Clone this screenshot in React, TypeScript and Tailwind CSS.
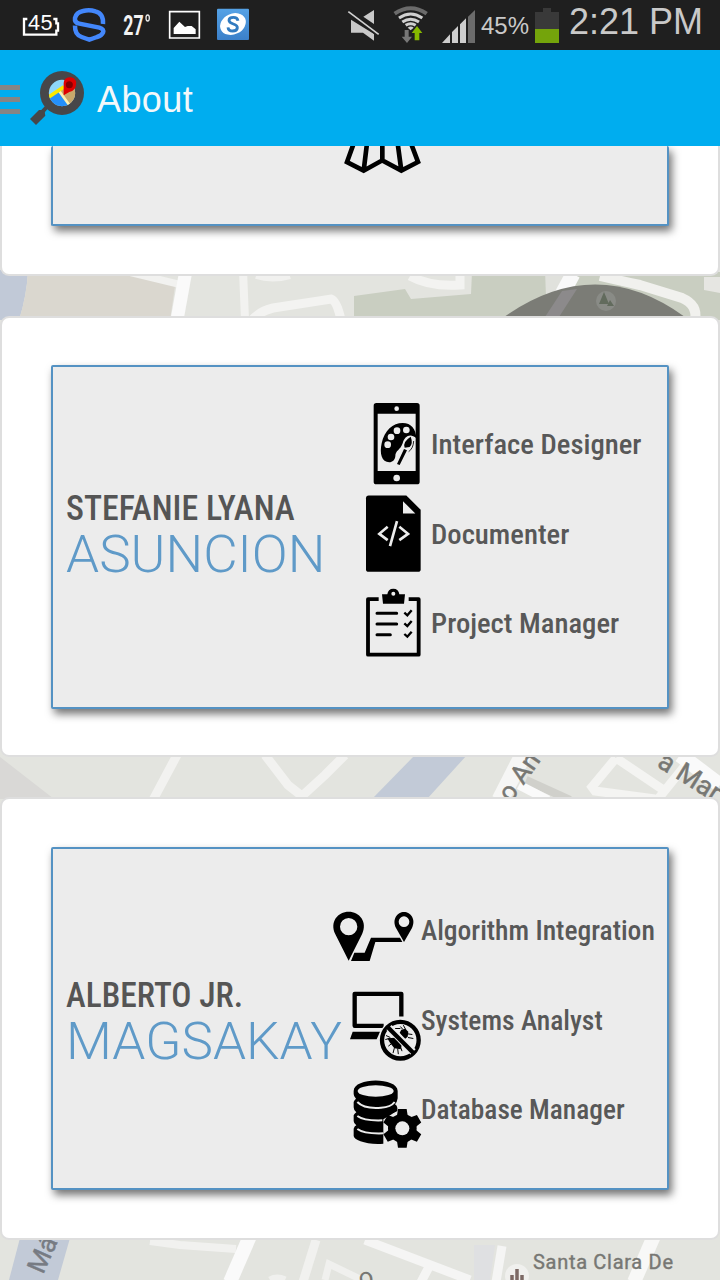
import type { ReactNode } from "react";

function StatusBar() {
  return (
    <div className="flex h-[50px] w-full shrink-0 items-start bg-[#1f1f1f] font-['Liberation_Sans',sans-serif] text-[#c9c9c9]">
      <svg className="h-[50px] w-[60px]" viewBox="0 0 180 150">
        <path d="M82 57h-10v47h97v-12h5v-22h-5v-13h-9" fill="none" stroke="#fff" strokeWidth="7" />
        <text x="84" y="90" fontSize="65" textLength="74" fill="#fff" fontFamily="Liberation Sans, sans-serif">45</text>
      </svg>
      <svg className="h-[50px] w-[54px]" viewBox="180 0 162 150">
        <path d="M309 72Q311 40 286 34Q268 28 249 33Q229 37 225 54Q223 68 238 71L298 83Q313 87 309 98Q305 107 291 111Q277 116 268 119Q259 116 245 111Q224 104 225 77" fill="none" stroke="#4387fb" strokeWidth="13.5" />
      </svg>
      <svg className="h-[50px] w-[54px]" viewBox="342 0 162 150">
        <text x="370" y="104" fontSize="82" fontWeight="700" textLength="61" lengthAdjust="spacingAndGlyphs" fill="#f2f2f2" fontFamily="Roboto, sans-serif">27</text>
        <ellipse cx="443" cy="54" rx="5" ry="9" fill="none" stroke="#e8e8e8" strokeWidth="4" />
      </svg>
      <svg className="h-[50px] w-[48px]" viewBox="504 0 144 150">
        <path d="M509 35h89v79h-89z" fill="none" stroke="#fff" strokeWidth="5" />
        <path d="M521 102V84l17-19 17 16 8-3 12 0 12 10v14z" fill="#fff" />
      </svg>
      <svg className="h-[50px] w-[40px]" viewBox="648 0 120 150">
        <defs>
          <linearGradient id="tile" x1="0" y1="0" x2="0" y2="1">
            <stop offset="0" stopColor="#55a2e6" />
            <stop offset="1" stopColor="#3b80c9" />
          </linearGradient>
        </defs>
        <rect x="651" y="26" width="96" height="94" rx="3" fill="url(#tile)" />
        <ellipse cx="699" cy="72" rx="40" ry="31" fill="#fff" transform="rotate(-25 699 72)" />
        <path d="M714 62Q712 52 700 52Q687 52 687 61Q687 68 700 72Q713 76 712 84Q711 93 698 93Q685 93 684 82" fill="none" stroke="#327bc0" strokeWidth="8.500" />
      </svg>
      <div className="flex-1" />
      <svg className="h-[50px] w-[137px]" viewBox="15 0 411 150">
        <path d="M33 59l69 43v20l-33-24H33zM70 50l32-20v42z" fill="#c9c9c9" />
        <path d="M27 33L117 105" stroke="#1f1f1f" strokeWidth="13" />
        <path d="M25 35L116 103" stroke="#d2d2d2" strokeWidth="5" />
        <path d="M164 41Q212 8 260 41" fill="none" stroke="#6b6b6b" strokeWidth="12" />
        <path d="M177 54Q212 30 247 54M187 66Q212 49 237 66M197 76Q212 66 227 76" fill="none" stroke="#d0d0d0" strokeWidth="9" />
        <path d="M203 83Q212 76 221 83L212 91z" fill="#d0d0d0" />
        <path d="M194 90h12v20h10l-15 19-16-19h9z" fill="#777" />
        <path d="M224 121V99h-9l16-21 16 21h-9v22z" fill="#86b800" />
        <path d="M306 129l24-26v26zM336 96l18-18v51h-18zM360 73l18-18v74h-18z" fill="#cecece" />
        <path d="M384 50l21-20v99h-21z" fill="#6b6b6b" />
      </svg>
      <span className="-ml-[1px] mt-[12px] w-[50px] text-[24px] leading-7 whitespace-nowrap">45%</span>
      <svg className="ml-[3px] h-[50px] w-[27px]" viewBox="582 0 81 150">
        <path d="M585 36h24V24h24v12h24v51h-72z" fill="#393939" />
        <path d="M585 87h72v42h-72z" fill="#74a40b" />
      </svg>
      <span className="mt-[2px] ml-[8px] w-[151px] text-[36px] leading-10 whitespace-nowrap">2:21 PM</span>
    </div>
  );
}

function Header() {
  return (
    <header className="flex h-24 w-full shrink-0 items-center bg-[#00adef]">
      <svg className="h-24 w-[97px]" viewBox="0 150 291 288">
        <path d="M0 262.500h60M0 298.500h60M0 334.500h60" stroke="#858585" strokeWidth="15" />
        <path d="M143 318L125 338" stroke="#474749" strokeWidth="12" />
        <path d="M117 330H133L136 347 108 375 90 357z" fill="#474749" />
        <circle cx="186" cy="279" r="66" fill="#474749" />
        <clipPath id="lens"><circle cx="186" cy="279" r="39.500" /></clipPath>
        <g clipPath="url(#lens)">
          <path d="M140 230h100v100H140z" fill="#8ed8fa" />
          <path d="M140 300L178 274 215 325H140z" fill="#2490fb" />
          <path d="M178 274L197 255 240 245V325H215z" fill="#c8a86b" />
          <path d="M178 274L210 318" stroke="#fff1b0" strokeWidth="8" />
          <path d="M142 294L192 260" stroke="#fbe800" strokeWidth="11" />
        </g>
        <path d="M191 286V249a19 17 0 1 1 37 5q0 16-20 22z" fill="#e00000" />
        <circle cx="208" cy="254" r="10.500" fill="#850000" />
      </svg>
      <h1 className="pt-[4px] font-['Liberation_Sans',sans-serif] text-[36px] leading-10 tracking-[0.4px] text-[#f3f8fa]">About</h1>
    </header>
  );
}

function MapBackground() {
  return (
    <svg className="absolute inset-0 h-full w-full" viewBox="0 146 720 1134">
      <rect y="146" width="720" height="1134" fill="#e3e4df" />
      <g>
        <path d="M0 270H28Q27 295 19 320H0z" fill="#c1c9d7" />
        <path d="M28 270H120L175 286 170 320H19Q27 295 28 270z" fill="#dad7cf" />
        <path d="M120 270L178 284" stroke="#f2f2f0" strokeWidth="7" />
        <path d="M186 270L177 320" stroke="#fafafa" strokeWidth="13" />
        <path d="M243 270L245 320" stroke="#f2f2f0" strokeWidth="8" />
        <path d="M252 320Q260 311 273 308L331 299Q337 301 341 320" fill="none" stroke="#f3f3f1" strokeWidth="9" />
        <path d="M256 276Q272 281 290 276" fill="none" stroke="#f1f1ef" strokeWidth="6" />
        <path d="M354 296L405 289 411 299 471 294 472 272H720V320H354z" fill="#c9cec1" />
        <path d="M545 270H575L556 292 546 297z" fill="#e0e1dc" />
        <path d="M410 276Q430 287 460 285V274" fill="none" stroke="#f3f3f1" strokeWidth="9" />
        <path d="M573 274L548 320" stroke="#f9f9f9" strokeWidth="15" />
        <path d="M600 276Q617 280 640 285L682 298Q698 305 695 320" fill="none" stroke="#f1f1ee" strokeWidth="10" />
        <path d="M704 277H720V293L704 290z" fill="#e6e6e2" />
        <path d="M504 317Q596 252 685 317z" fill="#7b7c76" />
        <path d="M562 291L577 289 559 317H545z" fill="#8c8a8b" />
        <circle cx="606" cy="301" r="10" fill="#898b86" />
        <path d="M604 292l5 12h-10zM610 300l4 6h-7z" fill="#626b5d" />
      </g>
      <g>
        <path d="M0 757L54 799H0z" fill="#d9d8d6" />
        <path d="M177 755L153 800M265 755L288 785 302 796 325 775 345 755" fill="none" stroke="#f2f2f0" strokeWidth="9" />
        <path d="M415 755H467L427 799H372z" fill="#c2cad7" />
        <path d="M523 755L500 800" stroke="#f6f6f5" strokeWidth="17" />
        <path d="M526 780L570 800" stroke="#d0d0cb" strokeWidth="8" />
        <path d="M519 785L548 800" stroke="#fafafa" strokeWidth="9" />
        <path d="M616 758L592 787 595 791 655 799M616 758L662 789 M692 757L658 799" fill="none" stroke="#f4f4f2" strokeWidth="9" />
        <path d="M680 755L720 785" stroke="#fafafa" strokeWidth="15" />
        <g fill="#777773" fontFamily="Roboto, sans-serif" stroke="#777773" strokeWidth=".5">
          <text transform="translate(511 803) rotate(-55)" fontSize="26">o An</text>
          <text transform="translate(656 766) rotate(32)" fontSize="27">a Mar</text>
        </g>
      </g>
      <g>
        <path d="M20 1238H70L58 1280H9z" fill="#c2cad7" />
        <path d="M150 1241L180 1245 236 1249" fill="none" stroke="#f1f1ef" strokeWidth="8" />
        <path d="M250 1236L230 1282" stroke="#fafafa" strokeWidth="14" />
        <path d="M316 1240L303 1282" stroke="#f1f1ef" strokeWidth="9" />
        <path d="M325 1280L329 1264 362 1280M270 1280Q277 1276 285 1280" fill="none" stroke="#f0f0ee" strokeWidth="7" />
        <path d="M365 1240L470 1280M430 1265L421 1282M502 1246L496 1282" fill="none" stroke="#f5f5f4" strokeWidth="9" />
        <path d="M474 1245h21l-5 35h-16z" fill="#dfe0e2" />
        <path d="M654 1236L634 1282" stroke="#f8f8f7" strokeWidth="14" />
        <circle cx="517" cy="1276" r="12" fill="#f0f0ee" />
        <path d="M512 1275v6M517 1269v12M522 1275v6" stroke="#7c6965" strokeWidth="3.500" />
        <g fill="#777773" fontFamily="Roboto, sans-serif">
          <text transform="translate(43 1275) rotate(-66)" fontSize="26" fill="#777b83" stroke="#777b83" strokeWidth=".5">Má</text>
          <text x="533" y="1269" fontSize="20" textLength="140" stroke="#777773" strokeWidth=".4">Santa Clara De</text>
          <text transform="translate(360 1287) rotate(-10)" fontSize="26">o</text>
        </g>
      </g>
    </svg>
  );
}

const PANEL =
  "flex w-[618px] rounded-[2px] border-2 border-[#5492c3] bg-[#ececec] shadow-[3px_5px_8px_rgba(0,0,0,0.55)]";
const CARD =
  "ml-[2px] flex w-[716px] shrink-0 justify-center bg-white shadow-[0_0_0_2px_#dedede]";

function Skill({ box, width, label, labelClass, children }: { box: string; width: string; label: string; labelClass: string; children: ReactNode }) {
  return (
    <li className="flex h-[89.5px] items-center">
      <svg className={"h-[89.5px] shrink-0 overflow-visible " + width} viewBox={box}>{children}</svg>
      <span className={"origin-left text-[28px] leading-8 font-medium font-stretch-condensed whitespace-nowrap text-[#585858] " + labelClass}>{label}</span>
    </li>
  );
}

function Name({ first, last, className, firstClass }: { first: string; last: string; className: string; firstClass: string }) {
  return (
    <div className={"shrink-0 pl-[13px] whitespace-nowrap " + className}>
      <div className={"origin-left text-[35px] leading-[41px] font-medium font-stretch-condensed text-[#555] " + firstClass}>{first}</div>
      <div className="origin-left scale-x-[1.02] font-[Roboto,sans-serif] text-[52px] leading-[52px] font-light text-[#5f9ac8]">{last}</div>
    </div>
  );
}

function StefanieCard() {
  return (
    <section className={CARD + " h-[437px] rounded-[7px] pt-[47px] pb-[46px]"}>
      <div className={PANEL}>
        <Name first="STEFANIE LYANA" last="ASUNCION" className="w-[312px] pt-[121px]" firstClass="scale-x-[0.967]" />
        <ul className="pt-[33px]">
          <Skill box="45 30 171 268.500" width="w-[57px]" label="Interface Designer" labelClass="ml-[9px] scale-x-[1.025]">
            <path fillRule="evenodd" d="M79 39H201q8 0 8 8V275q0 8-8 8H79q-8 0-8-8V47q0-8 8-8zM83 71V243H197V71z" />
            <circle cx="140" cy="56" r="7" fill="#ececec" />
            <circle cx="140" cy="264" r="10" fill="#ececec" />
            <path d="M118 217C95 217 88 190 95 160C103 121 129 99 158 99C184 99 198 117 199 145C181 129 164 138 158 160C151 181 136 181 136 199C135 210 127 217 118 217z" />
            <g fill="#ececec"><circle cx="113" cy="164" r="10" /><circle cx="123" cy="141" r="10" /><circle cx="141" cy="122" r="10" /><circle cx="169" cy="120" r="10" /></g>
            <path d="M184 137q10 20-2 37l-16 5-17 46-11-6 20-43q-3-20 26-39z" fill="#ececec" />
            <path d="M182 140q8 20-3 31l-15 2q-7-17 18-33zM162 177l9 4-22 44-8-3z" />
            <path d="M191 153q-1 22-15 32" fill="none" stroke="#000" strokeWidth="2.500" />
          </Skill>
          <Skill box="45 298.500 171 268.500" width="w-[57px]" label="Documenter" labelClass="ml-[9px] pt-px scale-x-[1.025]">
            <path d="M56 315H169L212 358V536q0 8-8 8H56q-8 0-8-8V323q0-8 8-8z" />
            <path d="M159 332V369H196z" fill="#ececec" />
            <path d="M113 409L88 430L113 449M148 409L174 430L148 449M141 392L120 467" fill="none" stroke="#ececec" strokeWidth="8" />
          </Skill>
          <Skill box="45 567 171 268.500" width="w-[57px]" label="Project Manager" labelClass="ml-[9px] scale-x-[1.025]">
            <path d="M86 627.500H54V794H206V627.500H176" fill="none" stroke="#000" strokeWidth="11.500" strokeLinejoin="round" />
            <path fillRule="evenodd" d="M96 613H112Q114 596 130 596Q146 596 148 613H165L162 641H99zM124 611a6 6 0 1 0 12 0a6 6 0 1 0-12 0" />
            <path d="M81 670H140M81 702H140M81 734H121" stroke="#000" strokeWidth="9" strokeLinecap="round" />
            <path d="M163 668l9 8 13-15M163 700l9 8 13-15M163 732l9 8 13-15" fill="none" stroke="#000" strokeWidth="7" />
          </Skill>
        </ul>
      </div>
    </section>
  );
}

function AlbertoCard() {
  return (
    <section className={CARD + " h-[439px] rounded-[7px] pt-[48px] pb-[48px]"}>
      <div className={PANEL}>
        <Name first="ALBERTO JR." last="MAGSAKAY" className="w-[279px] pt-[126px]" firstClass="scale-x-[0.957]" />
        <ul className="pt-[37px]">
          <Skill box="36 -42 267 268.500" width="w-[89px]" label="Algorithm Integration" labelClass="pt-px scale-x-[0.984]">
            <path fillRule="evenodd" d="M86 182L46 103C28 65 54 35 86 35S144 65 126 103zM60 80a26 26 0 1 0 52 0a26 26 0 1 0-52 0" />
            <path fillRule="evenodd" d="M252 126L228 84C215 58 232 36 252 36S289 58 276 84zM236 65a16 16 0 1 0 32 0a16 16 0 1 0-32 0" />
            <path d="M93 183L103 158H134L153 113H240L247 126H166L149 183z" />
          </Skill>
          <Skill box="36 226.500 267 268.500" width="w-[89px]" label="Systems Analyst" labelClass="pt-px scale-x-[0.984]">
            <path d="M191 376H104V280H244V348" fill="none" stroke="#000" strokeWidth="13" strokeLinejoin="round" />
            <path d="M98 394H180L170 416H90z" />
            <circle cx="241" cy="419" r="65" fill="#ececec" />
            <path d="M239 397l5-9 12-3 9 9-2 15-10 8zM202 413l23-1 20 23-3 11-19-3-13-16z" />
            <path d="M241 378l7 8M277 402l-14-2M250 374l7 13M280 414l-16-3M225 384h16M196 417l13-3M205 437l9-7M219 458l4-15M235 461l-2-17M198 405l13 6M246 452l-4-12" stroke="#000" strokeWidth="3" />
            <circle cx="241" cy="419" r="55" fill="none" stroke="#000" strokeWidth="13" />
            <path d="M207 381L279 454" stroke="#ececec" strokeWidth="22" />
            <path d="M202 379L281 458" stroke="#000" strokeWidth="13" />
          </Skill>
          <Skill box="36 495 267 268.500" width="w-[89px]" label="Database Manager" labelClass="pt-px scale-x-[0.978]">
            <path d="M101 573C101 531 233 531 233 573V595Q231 608 225 613Q234 618 232 633L190 658V731C140 735 101 720 101 708V686Q103 679 109 676Q101 670 101 663V646Q103 641 109 637Q101 631 101 622V606Q103 600 108 596Q101 590 101 582z" />
            <ellipse cx="167" cy="573" rx="54" ry="17" fill="#ececec" />
            <path d="M112 606Q132 627 183 623Q213 621 224 606M112 648Q132 663 187 661M112 687Q132 702 190 700" fill="none" stroke="#ececec" strokeWidth="6" />
            <g transform="translate(247 685)">
              <circle r="52" fill="#ececec" />
              <circle r="43" />
              <path d="M-13-58H13L17-32H-17zM-13 58H13L17 32H-17z" />
              <path d="M-13-58H13L17-32H-17zM-13 58H13L17 32H-17z" transform="rotate(60)" />
              <path d="M-13-58H13L17-32H-17zM-13 58H13L17 32H-17z" transform="rotate(120)" />
              <circle r="21" fill="#ececec" />
            </g>
          </Skill>
        </ul>
      </div>
    </section>
  );
}

export default function App() {
  return (
    <div className="flex h-[1280px] w-[720px] flex-col overflow-hidden bg-white font-['Roboto_Condensed',Roboto,sans-serif]">
      <StatusBar />
      <Header />
      <main className="relative h-[1134px] w-full overflow-hidden">
        <MapBackground />
        <div className="relative flex flex-col">
          <section className={CARD + " h-[128px] rounded-b-[7px] pb-[48px]"}>
            <div className={PANEL + " border-t-0 pl-[290px]"}>
              <svg className="h-[30px] w-[80px]" viewBox="40 18 240 90">
                <path d="M73 8L52 66L102 92L158 61L215 92L265 66L244 10M112 10L102 92M158 10V63M204 10L215 92" fill="none" stroke="#000" strokeWidth="14" />
              </svg>
            </div>
          </section>
          <div className="h-11" />
          <StefanieCard />
          <div className="h-11" />
          <AlbertoCard />
        </div>
      </main>
    </div>
  );
}
